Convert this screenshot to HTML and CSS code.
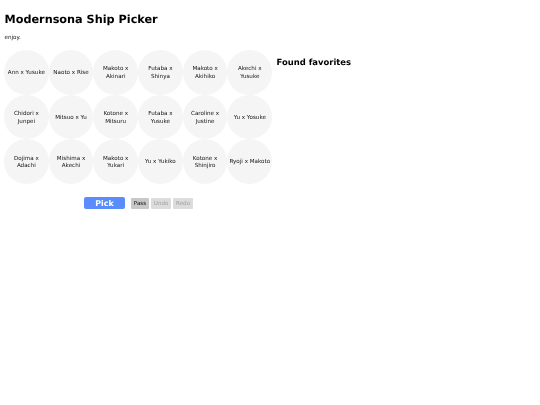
FILE: index.html
```html
<!DOCTYPE html>
<html lang="en">
<head>
<meta charset="utf-8">
<title>Modernsona Ship Picker</title>
<link rel="stylesheet" href="styles.css">
</head>
<body>
<div class="page">
<h1 class="title">Modernsona Ship Picker</h1>
<p class="intro">enjoy.</p>
<div class="layout">
  <main class="picker">
    <div class="grid">
      <div class="ship">Ann x Yusuke</div>
      <div class="ship">Naoto x Rise</div>
      <div class="ship">Makoto x Akinari</div>
      <div class="ship">Futaba x Shinya</div>
      <div class="ship">Makoto x Akihiko</div>
      <div class="ship">Akechi x Yusuke</div>
      <div class="ship">Chidori x Junpei</div>
      <div class="ship">Mitsuo x Yu</div>
      <div class="ship">Kotone x Mitsuru</div>
      <div class="ship">Futaba x Yusuke</div>
      <div class="ship">Caroline x Justine</div>
      <div class="ship">Yu x Yosuke</div>
      <div class="ship">Dojima x Adachi</div>
      <div class="ship">Mishima x Akechi</div>
      <div class="ship">Makoto x Yukari</div>
      <div class="ship">Yu x Yukiko</div>
      <div class="ship">Kotone x Shinjiro</div>
      <div class="ship">Ryoji x Makoto</div>
    </div>
    <div class="controls">
      <button class="pick">Pick</button>
      <div class="secondary">
        <button class="small active">Pass</button>
        <button class="small">Undo</button>
        <button class="small">Redo</button>
      </div>
    </div>
  </main>
  <aside class="favorites">
    <h2 class="fav-title">Found favorites</h2>
  </aside>
</div>
</div>
</body>
</html>
```
FILE: styles.css
```css
html, body { margin: 0; padding: 0; background: #fff; }
body {
  font-family: "DejaVu Sans", sans-serif;
  color: #000;
  text-rendering: geometricPrecision;
}
.page {
  padding: 0 4.5px;
  min-height: 405px;
  box-sizing: border-box;
  filter: blur(0.25px);
}
.title {
  margin: 0;
  padding-top: 13px;
  font-size: 11.25px;
  line-height: 14px;
  font-weight: 700;
}
.intro {
  margin: 0;
  padding-top: 7px;
  font-size: 5.6px;
  line-height: 8px;
  color: #111;
}
.layout { display: flex; padding-top: 8px; }
.picker { width: 267px; }
.grid {
  display: grid;
  grid-template-columns: repeat(6, 44.7px);
  grid-auto-rows: 44.7px;
  margin-left: -0.5px;
}
.ship {
  width: 44.7px;
  height: 44.7px;
  box-sizing: border-box;
  padding: 3px 0.85px 0;
  border-radius: 50%;
  background: #f5f5f5;
  display: flex;
  align-items: center;
  justify-content: center;
  text-align: center;
  font-size: 5.6px;
  line-height: 7.5px;
  color: #111;
}
.controls {
  display: flex;
  align-items: center;
  padding: 13px 0 0 79.5px;
  gap: 6px;
}
.pick {
  width: 41px;
  height: 12px;
  padding: 0;
  border: 0;
  border-radius: 2px;
  background: #5a8dfb;
  color: #fff;
  font: 700 7.9px "DejaVu Sans", sans-serif;
}
.secondary { display: flex; gap: 2px; }
.small {
  height: 11px;
  padding: 0 2.8px;
  border: 0;
  border-radius: 1px;
  background: #dcdcdc;
  color: #a0a0a0;
  font: 5.6px "DejaVu Sans", sans-serif;
}
.small.active { background: #c8c8c8; color: #111; }
.favorites { padding: 7px 0 0 5px; }
.fav-title {
  margin: 0;
  font-size: 8.44px;
  line-height: 11px;
  font-weight: 700;
}
```
